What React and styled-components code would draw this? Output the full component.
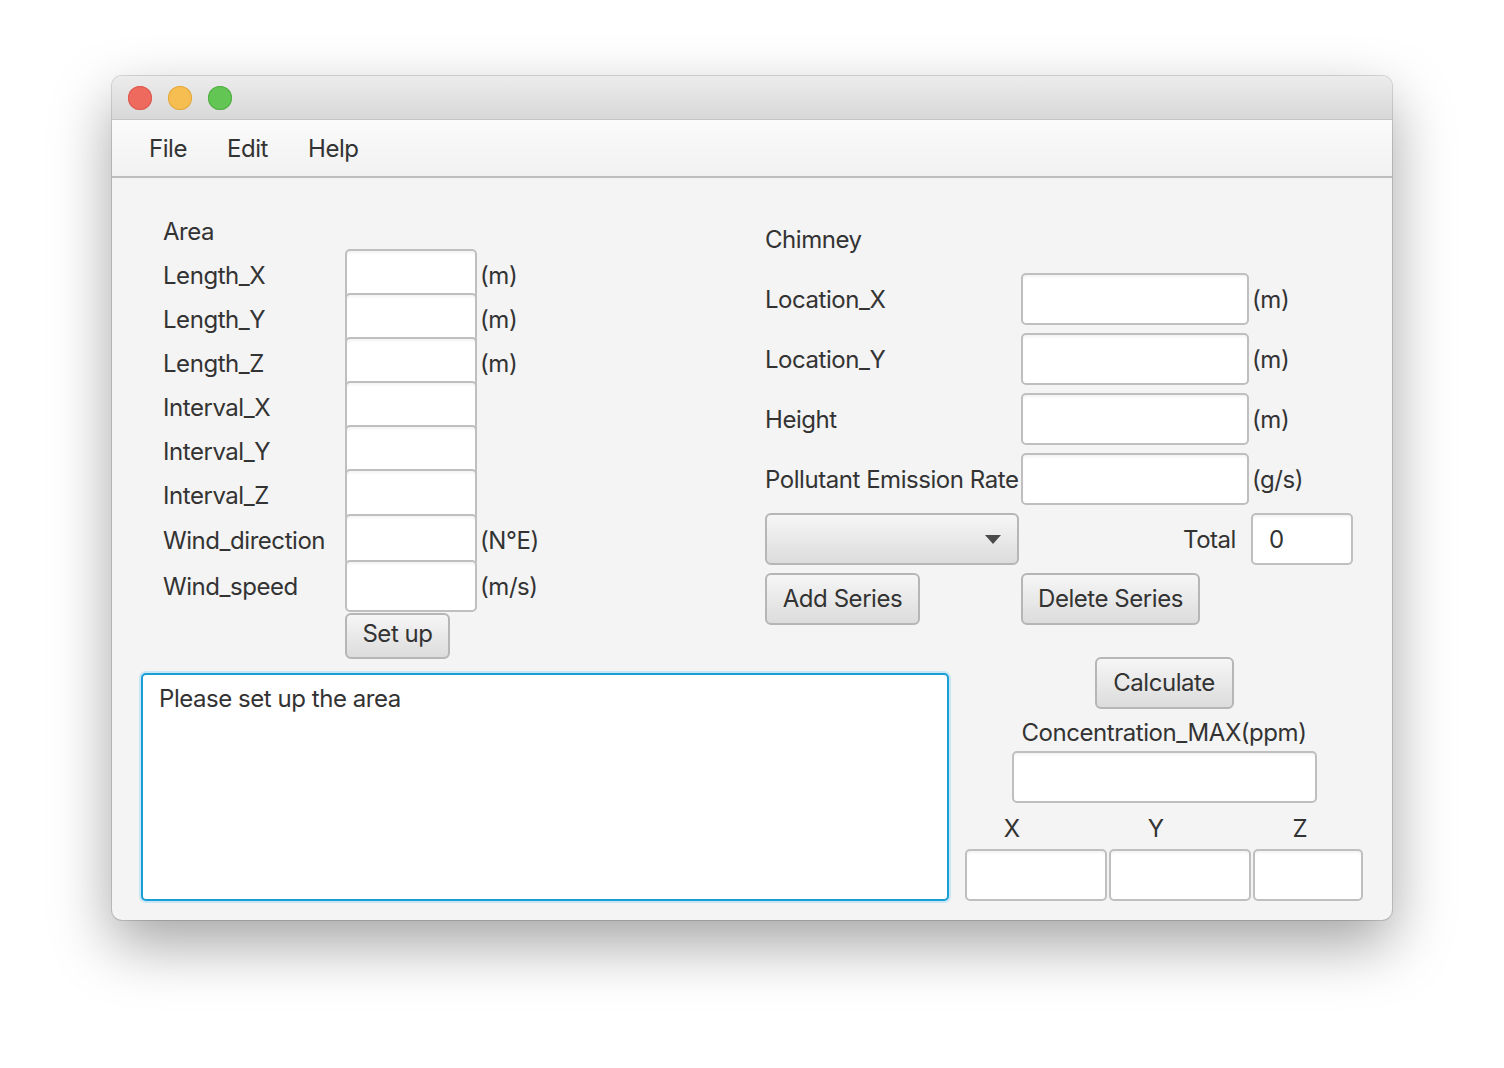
import styled, { createGlobalStyle } from "styled-components";

const GlobalStyle = createGlobalStyle`
  html, body {
    margin: 0;
    padding: 0;
    background: #ffffff;
  }
  body {
    font-family: "Inter", "Noto Sans", sans-serif;
    color: #333333;
  }
`;

const Page = styled.div`
  width: 1504px;
  height: 1068px;
  padding: 76px 0 0 112px;
  box-sizing: border-box;
`;

const Window = styled.div`
  width: 1280px;
  height: 844px;
  border-radius: 10px;
  overflow: hidden;
  background: #f4f4f4;
  box-shadow: 0 0 0 1px rgba(0, 0, 0, 0.14), 0 24px 60px rgba(0, 0, 0, 0.36);
  display: flex;
  flex-direction: column;
`;

const TitleBar = styled.div`
  height: 44px;
  display: flex;
  align-items: center;
  gap: 16px;
  padding-left: 16px;
  background: linear-gradient(#ececec, #d8d8d8);
  border-bottom: 1px solid #c4c4c4;
  box-sizing: border-box;
`;

const Light = styled.span`
  width: 24px;
  height: 24px;
  border-radius: 50%;
  background: ${(p) => p.$color};
  box-shadow: inset 0 0 0 1px ${(p) => p.$edge};
`;

const MenuBar = styled.div`
  height: 58px;
  display: flex;
  align-items: center;
  padding-left: 17px;
  background: linear-gradient(#fbfbfb, #f1f1f1);
  border-bottom: 2px solid #bdbdbd;
  box-sizing: border-box;
`;

const MenuItem = styled.span`
  font-size: 24px;
  letter-spacing: -0.45px;
  padding: 0 20px;
  color: #333;
`;

const Content = styled.div`
  flex: 1;
  padding: 31px 0 0 28px;
  display: flex;
  flex-direction: column;
`;

const TopRow = styled.div`
  display: grid;
  grid-template-columns: 625px auto;
`;

const LeftForm = styled.div`
  display: grid;
  grid-template-columns: 182px 132px auto;
  grid-template-rows: repeat(7, 44px) 46px 46px auto;
  padding-left: 23px;
`;

const RightForm = styled.div`
  display: grid;
  grid-template-columns: 256px 228px auto;
  grid-auto-rows: 60px;
`;

const Label = styled.span`
  font-size: 24px;
  letter-spacing: -0.45px;
  align-self: center;
  white-space: nowrap;
  grid-column: ${(p) => p.$col || "auto"};
  text-align: ${(p) => (p.$right ? "right" : "left")};
  padding-right: ${(p) => (p.$right ? "13px" : "0")};
`;

const Unit = styled(Label)`
  margin-left: 3px;
`;

const Field = styled.input`
  box-sizing: border-box;
  height: 52px;
  width: ${(p) => p.$w || "100%"};
  margin: ${(p) => p.$overlap || 0}px 0 ${(p) => p.$overlap || 0}px
    ${(p) => p.$ml || 0}px;
  align-self: center;
  border: 2px solid #bfbfbf;
  border-radius: 5px;
  background: #ffffff;
  box-shadow: inset 0 3px 3px -1px rgba(0, 0, 0, 0.05);
  font-family: inherit;
  font-size: 24px;
  color: #333;
  padding: 0 0 0 ${(p) => p.$pad || 10}px;
  outline: none;
  position: relative;
  grid-column: ${(p) => p.$col || "auto"};
`;

const Button = styled.button`
  box-sizing: border-box;
  height: ${(p) => p.$h || 52}px;
  width: ${(p) => p.$w}px;
  border: 2px solid #b6b6b6;
  border-radius: 6px;
  background: linear-gradient(#f6f6f6, #dcdcdc);
  font-family: inherit;
  font-size: 24px;
  letter-spacing: -0.45px;
  color: #333;
  padding: 0 0 ${(p) => p.$pb || 0}px;
  align-self: ${(p) => p.$align || "center"};
  grid-column: ${(p) => p.$col || "auto"};
  margin-top: ${(p) => p.$mt || 0}px;
`;

const Combo = styled.div`
  box-sizing: border-box;
  height: 52px;
  width: 254px;
  border: 2px solid #b6b6b6;
  border-radius: 6px;
  background: linear-gradient(#f6f6f6, #dcdcdc);
  align-self: center;
  display: flex;
  align-items: center;
  justify-content: flex-end;
  padding-right: 16px;
`;

const Arrow = styled.span`
  width: 0;
  height: 0;
  border-left: 8px solid transparent;
  border-right: 8px solid transparent;
  border-top: 9px solid #4a4a4a;
`;

const BottomRow = styled.div`
  display: grid;
  grid-template-columns: 810px 398px;
  column-gap: 15px;
`;

const Log = styled.textarea`
  box-sizing: border-box;
  width: 808px;
  height: 228px;
  margin: 14px 0 0 1px;
  resize: none;
  border: 2px solid #1a9ed6;
  border-radius: 5px;
  box-shadow: 0 0 0 2px #c9e6f4;
  background: #ffffff;
  font-family: inherit;
  font-size: 24px;
  letter-spacing: -0.45px;
  line-height: 30px;
  color: #333;
  padding: 9px 16px;
  outline: none;
`;

const CalcPanel = styled.div`
  display: flex;
  flex-direction: column;
  align-items: center;
`;

const Caption = styled.div`
  font-size: 24px;
  letter-spacing: -0.45px;
  line-height: 30px;
  margin: ${(p) => p.$m};
  white-space: nowrap;
`;

const AxisLabels = styled.div`
  display: grid;
  grid-template-columns: repeat(3, 144px);
  margin: 11px 0 5px -25px;
  align-self: flex-start;
`;

const Axis = styled.span`
  font-size: 24px;
  line-height: 30px;
  text-align: center;
`;

const AxisFields = styled.div`
  display: grid;
  grid-template-columns: 142px 142px 110px;
  gap: 2px;
`;

const leftRows = [
  ["Length_X", "(m)"],
  ["Length_Y", "(m)"],
  ["Length_Z", "(m)"],
  ["Interval_X", ""],
  ["Interval_Y", ""],
  ["Interval_Z", ""],
  ["Wind_direction", "(N°E)"],
  ["Wind_speed", "(m/s)"],
];

const rightRows = [
  ["Location_X", "(m)"],
  ["Location_Y", "(m)"],
  ["Height", "(m)"],
  ["Pollutant Emission Rate", "(g/s)"],
];

const App = () => {
  return (
    <Page>
      <GlobalStyle />
      <Window>
        <TitleBar>
          <Light $color="#ee6a5f" $edge="#dc5a4f" />
          <Light $color="#f6be50" $edge="#e0a93f" />
          <Light $color="#62c554" $edge="#52ae45" />
        </TitleBar>
        <MenuBar>
          <MenuItem>File</MenuItem>
          <MenuItem>Edit</MenuItem>
          <MenuItem>Help</MenuItem>
        </MenuBar>
        <Content>
          <TopRow>
            <LeftForm>
              <Label $col="1 / 4">Area</Label>
              {leftRows.map(([name, unit], i) => (
                <>
                  <Label key={name}>{name}</Label>
                  <Field $overlap={i < 6 ? -4 : -3} />
                  <Unit>{unit}</Unit>
                </>
              ))}
              <Button $col="2" $w={105} $h={46} $align="start" $mt={4} $pb={5}>
                Set up
              </Button>
            </LeftForm>
            <RightForm>
              <Label $col="1 / 4">Chimney</Label>
              {rightRows.map(([name, unit]) => (
                <>
                  <Label key={name}>{name}</Label>
                  <Field $w="228px" />
                  <Unit>{unit}</Unit>
                </>
              ))}
              <Combo>
                <Arrow />
              </Combo>
              <Label $right>Total</Label>
              <Field $w="102px" $pad={16} $ml={2} defaultValue="0" />
              <Button $w={155} $pb={2}>Add Series</Button>
              <Button $w={179} $pb={2}>Delete Series</Button>
            </RightForm>
          </TopRow>
          <BottomRow>
            <Log defaultValue="Please set up the area" />
            <CalcPanel>
              <Button $w={139} $mt={-2} $pb={2}>
                Calculate
              </Button>
              <Caption $m="9px 0 3px">Concentration_MAX(ppm)</Caption>
              <Field $w="305px" />
              <AxisLabels>
                <Axis>X</Axis>
                <Axis>Y</Axis>
                <Axis>Z</Axis>
              </AxisLabels>
              <AxisFields>
                <Field />
                <Field />
                <Field />
              </AxisFields>
            </CalcPanel>
          </BottomRow>
        </Content>
      </Window>
    </Page>
  );
};

export default App;
